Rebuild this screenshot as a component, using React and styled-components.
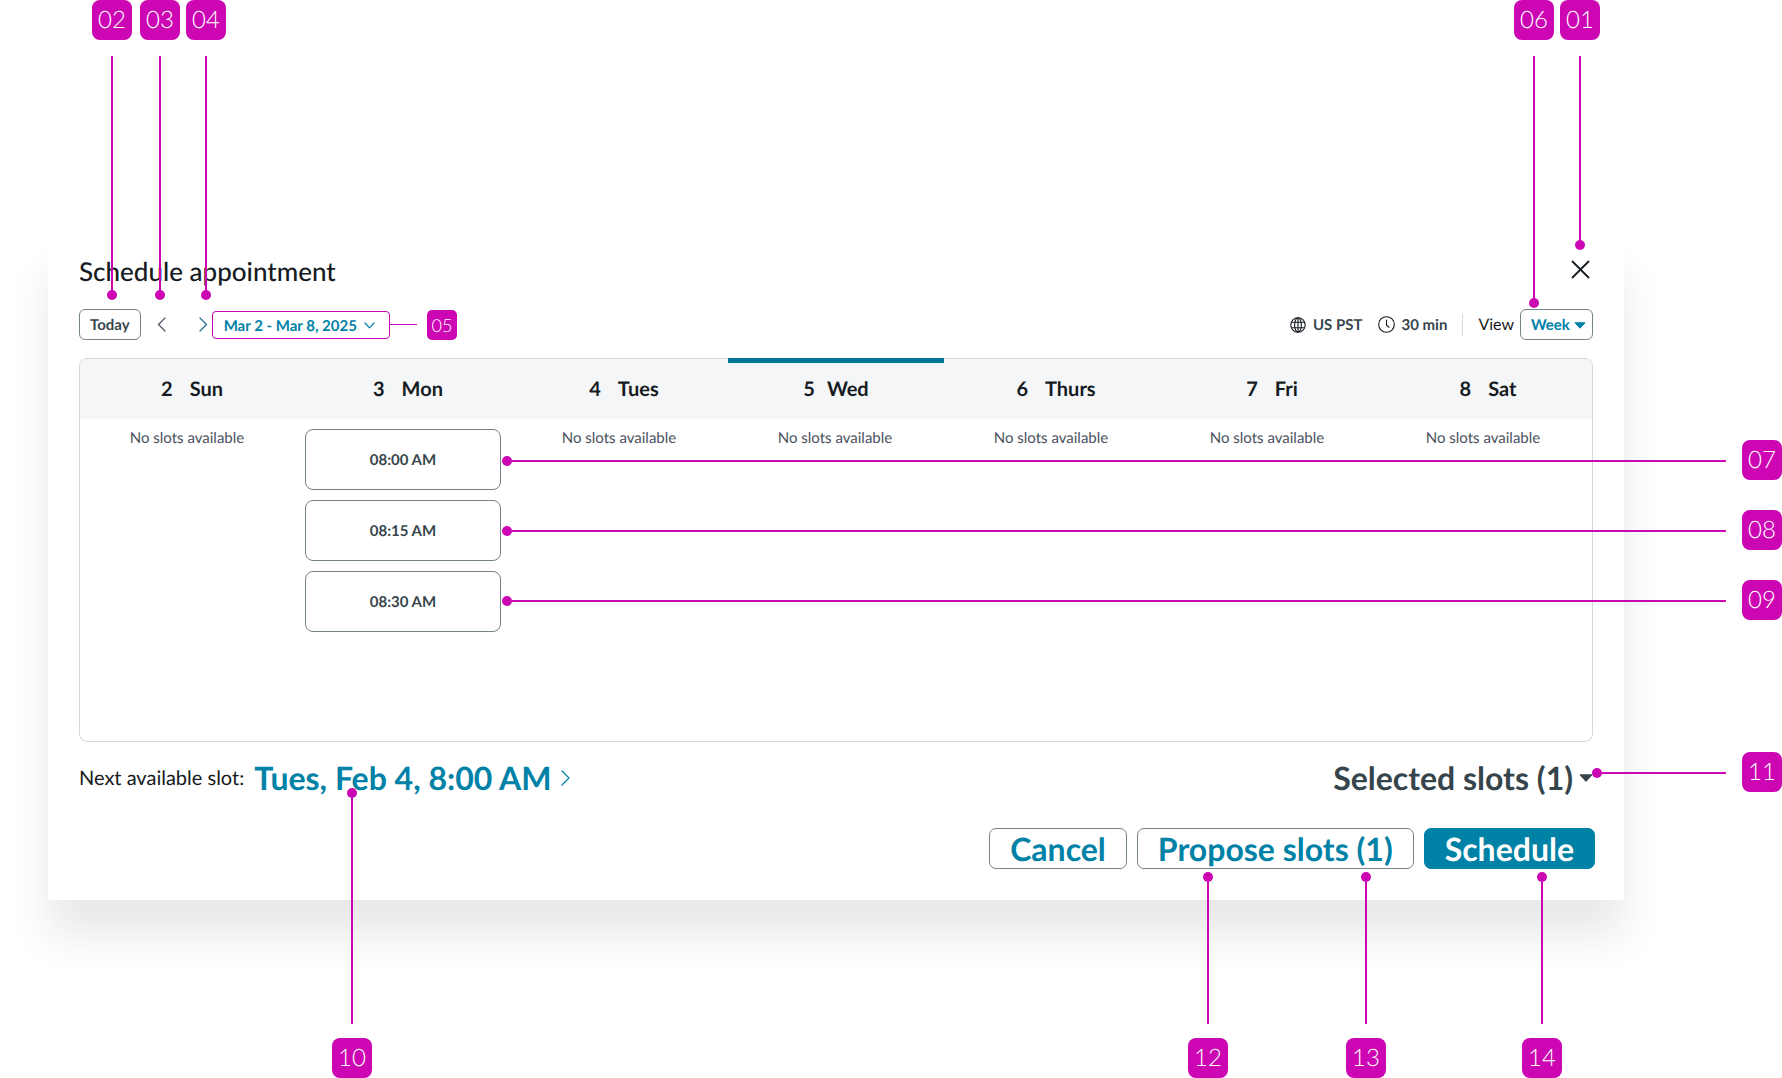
import React from "react";
import styled, { createGlobalStyle } from "styled-components";

const color = {
  pin: "#cb06b2",
  teal: "#0081a6",
  tealDark: "#007695",
  ink: "#161b22",
  slate: "#36454c",
  muted: "#4a5160",
  outline: "#74828a",
  rule: "#d3dade",
  head: "#f4f6f8",
};

const GlobalStyle = createGlobalStyle`
  *, *::before, *::after { box-sizing: border-box; }
  body {
    margin: 0;
    background: #fff;
    font-family: Lato, "Open Sans", sans-serif;
    text-rendering: geometricPrecision;
  }
  button, select { font-family: inherit; margin: 0; cursor: pointer; text-rendering: inherit; }
`;

const Stage = styled.main`
  position: relative;
  padding: 238px 158px 178px 48px;
`;

const Dialog = styled.section`
  padding: 17px 31px 31px;
  background: #fff;
  color: ${color.ink};
  box-shadow: 0 36px 40px rgba(0, 0, 0, 0.09);
`;

const Row = styled.div`
  display: flex;
  align-items: center;
  justify-content: space-between;
`;

const TitleRow = styled(Row)`
  height: 32px;
  margin-bottom: 22px;
`;

const Title = styled.h1`
  margin: 0;
  font-size: 26px;
  line-height: 34px;
  font-weight: 500;
`;

const IconButton = styled.button`
  display: flex;
  padding: 0;
  border: 0;
  background: none;
  color: ${(p) => p.$color || color.ink};
`;

const CloseButton = styled(IconButton)`
  margin-right: 3px;
  padding-bottom: 3px;
`;

const Toolbar = styled(Row)`
  height: 31px;
  margin-bottom: 18px;
`;

const Group = styled.div`
  display: flex;
  align-items: center;
  gap: ${(p) => p.$gap || 0}px;
`;

const OutlineButton = styled.button`
  height: 31px;
  padding: 0 10px;
  border: 1px solid ${color.outline};
  border-radius: 6px;
  background: #fff;
  color: ${color.slate};
  font-size: 15px;
  line-height: 20px;
  font-weight: 700;
`;

const Arrows = styled.div`
  display: flex;
  justify-content: space-between;
  width: 51px;
  margin: 0 4px 0 16px;
`;

const RangeButton = styled.button`
  display: flex;
  align-items: center;
  gap: 7px;
  height: 28px;
  padding: 2px 14px 0 11px;
  border: 1px solid ${color.pin};
  border-radius: 4px;
  background: #fff;
  color: ${color.teal};
  font-size: 15px;
  line-height: 20px;
  font-weight: 700;
`;

const Meta = styled.span`
  display: flex;
  align-items: center;
  gap: 7px;
  font-size: 15px;
  line-height: 20px;
  font-weight: 700;
  color: ${color.slate};
  svg { color: ${color.ink}; }
`;

const Divider = styled.span`
  width: 1px;
  height: 22px;
  background: ${color.rule};
`;

const ViewLabel = styled.label`
  font-size: 16px;
  line-height: 20px;
`;

const SelectBox = styled.span`
  display: grid;
  align-items: center;
  > * { grid-area: 1 / 1; }
  svg { justify-self: end; margin: 2px 7px 0 0; color: ${color.teal}; pointer-events: none; }
`;

const ViewSelect = styled.select`
  appearance: none;
  height: 31px;
  width: 73px;
  padding: 0 20px 0 10px;
  border: 1px solid ${color.outline};
  border-radius: 6px;
  background: #fff;
  color: ${color.teal};
  font-size: 15px;
  font-weight: 700;
`;

const Calendar = styled.div`
  min-height: 384px;
  border: 1px solid ${color.rule};
  border-radius: 8px;
`;

const Week = styled.table`
  width: 100%;
  table-layout: fixed;
  border-collapse: separate;
  border-spacing: 0;
`;

const DayHead = styled.th`
  position: relative;
  height: 60px;
  padding: ${(p) => (p.$today ? 0 : "0 0 0 8px")};
  background: ${color.head};
  font-size: 20px;
  line-height: 24px;
  font-weight: 700;
  &:first-child { border-top-left-radius: 7px; }
  &:last-child { border-top-right-radius: 7px; }
  &::before {
    content: "";
    display: ${(p) => (p.$today ? "block" : "none")};
    position: absolute;
    top: -1px;
    left: 0;
    right: 0;
    height: 5px;
    background: ${color.tealDark};
  }
`;

const DayName = styled.div`
  display: flex;
  justify-content: center;
  gap: ${(p) => (p.$today ? 12 : 17)}px;
`;

const DayCell = styled.td`
  padding: 10px 11px 10px 9px;
  vertical-align: top;
  text-align: center;
`;

const Empty = styled.p`
  margin: 0;
  font-size: 15px;
  line-height: 18px;
  color: ${color.muted};
`;

const SlotList = styled.div`
  display: grid;
  gap: 10px;
`;

const SlotButton = styled(OutlineButton)`
  height: 61px;
  border-radius: 8px;
`;

const SummaryRow = styled(Row)`
  height: 40px;
  margin: 16px 0 30px;
`;

const Hint = styled.span`
  font-size: 20px;
  line-height: 24px;
`;

const BigLink = styled.a`
  display: flex;
  align-items: center;
  gap: 10px;
  color: ${color.teal};
  font-size: 32px;
  line-height: 40px;
  font-weight: 700;
  text-decoration: none;
`;

const SelectedButton = styled.button`
  display: flex;
  align-items: center;
  gap: 6px;
  padding: 0;
  border: 0;
  background: none;
  color: ${color.slate};
  font-size: 32px;
  line-height: 40px;
  font-weight: 700;
`;

const Actions = styled.div`
  display: flex;
  justify-content: flex-end;
  gap: 10px;
  margin-right: -2px;
`;

const ActionButton = styled.button`
  height: 41px;
  padding: 0 20px;
  border: 1px solid ${(p) => (p.$primary ? color.teal : color.outline)};
  border-radius: 7px;
  background: ${(p) => (p.$primary ? color.teal : "#fff")};
  color: ${(p) => (p.$primary ? "#fff" : color.teal)};
  font-size: 32px;
  line-height: 38px;
  font-weight: 700;
`;

/* Annotation pins, laid over the dialog */
const Badge = styled.span`
  flex: none;
  display: flex;
  align-items: center;
  justify-content: center;
  width: ${(p) => (p.$small ? 30 : 40)}px;
  height: ${(p) => (p.$small ? 30 : 40)}px;
  border-radius: ${(p) => (p.$small ? 5 : 8)}px;
  background: ${color.pin};
  color: #fff;
  font-size: ${(p) => (p.$small ? 18 : 24)}px;
  line-height: 24px;
  font-weight: 300;
`;

const Dot = styled.span`
  flex: none;
  width: 10px;
  height: 10px;
  border-radius: 50%;
  background: ${color.pin};
`;

const Line = styled.span`
  flex: 1;
  background: ${color.pin};
`;

const Callout = styled.div`
  position: absolute;
  display: flex;
  align-items: center;
  pointer-events: none;
`;

const VerticalCallout = styled(Callout)`
  flex-direction: ${(p) => (p.$from === "top" ? "column" : "column-reverse")};
  ${(p) => p.$from}: 0;
  ${(p) => p.$side}: ${(p) => p.$at}px;
  height: ${(p) => p.$length}px;
  ${Line} { width: 2px; }
  ${Badge} { margin-${(p) => (p.$from === "top" ? "bottom: 16px" : "top: 14px")}; }
`;

const SideCallout = styled(Callout)`
  top: ${(p) => p.$at}px;
  right: 0;
  left: ${(p) => p.$left};
  ${Line} { height: 2px; margin-top: 2px; }
  ${Dot} { margin-top: 2px; }
  ${Badge} { margin-left: 16px; }
`;

const InlineCallout = styled.div`
  display: flex;
  align-items: center;
  ${Line} { flex: none; width: 27px; height: 1px; margin-right: 10px; }
`;

const verticalPins = [
  { id: "02", from: "top", side: "left", at: 92, length: 300 },
  { id: "03", from: "top", side: "left", at: 140, length: 300 },
  { id: "04", from: "top", side: "left", at: 186, length: 300 },
  { id: "06", from: "top", side: "right", at: 228, length: 308 },
  { id: "01", from: "top", side: "right", at: 182, length: 250 },
  { id: "10", from: "bottom", side: "left", at: 332, length: 290 },
  { id: "12", from: "bottom", side: "right", at: 554, length: 206 },
  { id: "13", from: "bottom", side: "right", at: 396, length: 206 },
  { id: "14", from: "bottom", side: "right", at: 220, length: 206 },
];

/* Right edge of the Monday column */
const slotEdge = "calc(69px + (100% - 268px) * 2 / 7)";
const sidePins = [
  { id: "07", at: 440, left: slotEdge },
  { id: "08", at: 510, left: slotEdge },
  { id: "09", at: 580, left: slotEdge },
  { id: "11", at: 752, left: "calc(100% - 190px)" },
];

const days = [
  { date: 2, name: "Sun", slots: [] },
  { date: 3, name: "Mon", slots: ["08:00 AM", "08:15 AM", "08:30 AM"] },
  { date: 4, name: "Tues", slots: [] },
  { date: 5, name: "Wed", slots: [], today: true },
  { date: 6, name: "Thurs", slots: [] },
  { date: 7, name: "Fri", slots: [] },
  { date: 8, name: "Sat", slots: [] },
];

const Stroke = ({ w, h, d, width = 1 }) => (
  <svg width={w} height={h} viewBox={`0 0 ${w} ${h}`} fill="none" stroke="currentColor" strokeWidth={width} strokeLinecap="round" strokeLinejoin="round" aria-hidden="true">
    <path d={d} />
  </svg>
);

const Triangle = ({ w = 12, h = 7 }) => (
  <svg width={w} height={h} viewBox="0 0 12 7" fill="currentColor" stroke="currentColor" strokeLinejoin="round" aria-hidden="true">
    <path d="M1 .8h10L6 6.2z" />
  </svg>
);

const Globe = () => (
  <svg width="16" height="16" viewBox="0 0 16 16" fill="none" stroke="currentColor" strokeWidth="1.1" aria-hidden="true">
    <circle cx="8" cy="8" r="7.2" />
    <ellipse cx="8" cy="8" rx="3.4" ry="7.2" />
    <path d="M8 .8v14.4M1.5 5.2h13M1.5 10.8h13" />
  </svg>
);

const Clock = () => (
  <svg width="17" height="17" viewBox="0 0 17 17" fill="none" stroke="currentColor" strokeWidth="1.1" strokeLinecap="round" aria-hidden="true">
    <circle cx="8.5" cy="8.5" r="7.8" />
    <path d="M8.5 4v5.2l2.6 2" />
  </svg>
);

export default function App() {
  return (
    <>
      <GlobalStyle />
      <Stage>
        <Dialog role="dialog" aria-labelledby="dialog-title">
          <TitleRow>
            <Title id="dialog-title">Schedule appointment</Title>
            <CloseButton aria-label="Close">
              <Stroke w={19} h={19} d="M1.5 1.5l16 16M17.5 1.5l-16 16" width={1.8} />
            </CloseButton>
          </TitleRow>

          <Toolbar>
            <Group>
              <OutlineButton>Today</OutlineButton>
              <Arrows>
                <IconButton aria-label="Previous week" $color="#4a5160">
                  <Stroke w={9} h={15} d="M8 1L1.5 7.5L8 14" width={1.2} />
                </IconButton>
                <IconButton aria-label="Next week" $color="#1b6f8d">
                  <Stroke w={9} h={15} d="M1 1l6.500 6.500L1 14" width={1.2} />
                </IconButton>
              </Arrows>
              <RangeButton>
                Mar 2 - Mar 8, 2025
                <Stroke w={11} h={7} d="M1 1l4.500 4.800L10 1" width={1.2} />
              </RangeButton>
              <InlineCallout>
                <Line />
                <Badge $small>05</Badge>
              </InlineCallout>
            </Group>
            <Group $gap={15}>
              <Meta><Globe />US PST</Meta>
              <Meta><Clock />30 min</Meta>
              <Divider />
              <Group $gap={6}>
                <ViewLabel htmlFor="view">View</ViewLabel>
                <SelectBox>
                  <ViewSelect id="view" defaultValue="Week">
                    <option>Week</option>
                    <option>Day</option>
                  </ViewSelect>
                  <Triangle />
                </SelectBox>
              </Group>
            </Group>
          </Toolbar>

          <Calendar>
            <Week>
              <thead>
                <tr>
                  {days.map((d) => (
                    <DayHead key={d.date} scope="col" $today={d.today}>
                      <DayName $today={d.today}>
                        <span>{d.date}</span>
                        <span>{d.name}</span>
                      </DayName>
                    </DayHead>
                  ))}
                </tr>
              </thead>
              <tbody>
                <tr>
                  {days.map((d) => (
                    <DayCell key={d.date}>
                      {d.slots.length ? (
                        <SlotList>
                          {d.slots.map((s) => <SlotButton key={s}>{s}</SlotButton>)}
                        </SlotList>
                      ) : (
                        <Empty>No slots available</Empty>
                      )}
                    </DayCell>
                  ))}
                </tr>
              </tbody>
            </Week>
          </Calendar>

          <SummaryRow>
            <Group $gap={10}>
              <Hint>Next available slot:</Hint>
              <BigLink href="#next">
                Tues, Feb 4, 8:00 AM
                <Stroke w={9} h={16} d="M1 1l7 7l-7 7" width={1.2} />
              </BigLink>
            </Group>
            <SelectedButton>
              Selected slots (1)
              <Triangle w={14} h={8} />
            </SelectedButton>
          </SummaryRow>

          <Actions>
            <ActionButton>Cancel</ActionButton>
            <ActionButton>Propose slots (1)</ActionButton>
            <ActionButton $primary>Schedule</ActionButton>
          </Actions>
        </Dialog>

        {verticalPins.map((p) => (
          <VerticalCallout key={p.id} $from={p.from} $side={p.side} $at={p.at} $length={p.length}>
            <Badge>{p.id}</Badge>
            <Line />
            <Dot />
          </VerticalCallout>
        ))}
        {sidePins.map((p) => (
          <SideCallout key={p.id} $at={p.at} $left={p.left}>
            <Dot />
            <Line />
            <Badge>{p.id}</Badge>
          </SideCallout>
        ))}
      </Stage>
    </>
  );
}
